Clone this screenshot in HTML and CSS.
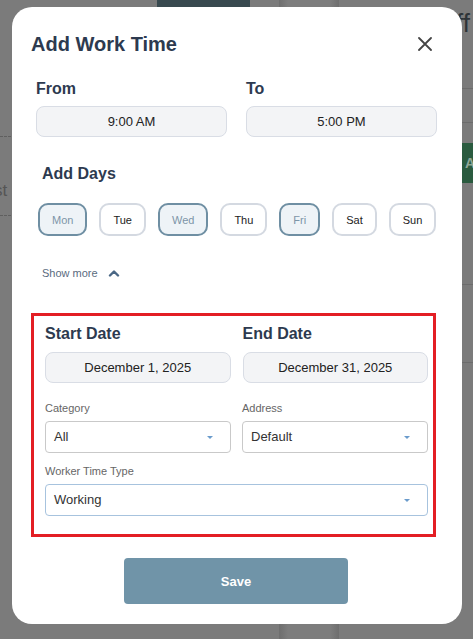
FILE: index.html
```html
<!DOCTYPE html>
<html lang="en">
<head>
    <meta charset="UTF-8">
    <meta name="viewport" content="width=device-width, initial-scale=1.0">
    <title>Add Work Time</title>
    <link rel="stylesheet" href="styles.css">
</head>
<body>
    <div class="backdrop">
        <div class="bg-bar"></div>
        <div class="bg-column"></div>
        <div class="bg-text-right">ff</div>
        <div class="bg-green">A</div>
        <div class="bg-line bg-line-r1"></div>
        <div class="bg-line bg-line-r2"></div>
        <div class="bg-line bg-line-r3"></div>
        <div class="bg-line bg-line-r4"></div>
        <div class="bg-dash bg-dash-1"></div>
        <div class="bg-dash bg-dash-2"></div>
        <div class="bg-text-left">st</div>
    </div>

    <div class="modal">
        <div class="modal-header">
            <h2>Add Work Time</h2>
            <button class="close-btn" aria-label="Close">
                <svg width="14" height="14" viewBox="0 0 14 14">
                    <path d="M1 1 L13 13 M13 1 L1 13" stroke="#444" stroke-width="1.8" stroke-linecap="round"/>
                </svg>
            </button>
        </div>

        <div class="two-col time-row">
            <div class="field">
                <label class="big-label">From</label>
                <div class="pill-input">9:00 AM</div>
            </div>
            <div class="field">
                <label class="big-label">To</label>
                <div class="pill-input">5:00 PM</div>
            </div>
        </div>

        <div class="days">
            <label class="big-label days-label">Add Days</label>
            <div class="day-list">
                <button class="day selected">Mon</button>
                <button class="day">Tue</button>
                <button class="day selected">Wed</button>
                <button class="day">Thu</button>
                <button class="day selected">Fri</button>
                <button class="day">Sat</button>
                <button class="day">Sun</button>
            </div>
            <div class="show-more">
                Show more
                <svg width="12" height="8" viewBox="0 0 12 8">
                    <path d="M2 6.5 L6 2.5 L10 6.5" fill="none" stroke="#4a6785" stroke-width="2.4" stroke-linecap="round" stroke-linejoin="round"/>
                </svg>
            </div>
        </div>

        <div class="highlight">
            <div class="two-col date-row">
                <div class="field">
                    <label class="big-label">Start Date</label>
                    <div class="pill-input">December 1, 2025</div>
                </div>
                <div class="field">
                    <label class="big-label">End Date</label>
                    <div class="pill-input">December 31, 2025</div>
                </div>
            </div>

            <div class="two-col select-row">
                <div class="field">
                    <label class="small-label">Category</label>
                    <div class="select">All<span class="caret"></span></div>
                </div>
                <div class="field">
                    <label class="small-label">Address</label>
                    <div class="select">Default<span class="caret"></span></div>
                </div>
            </div>

            <div class="field type-field">
                <label class="small-label">Worker Time Type</label>
                <div class="select focused">Working<span class="caret"></span></div>
            </div>
        </div>

        <div class="actions">
            <button class="save-btn">Save</button>
        </div>
    </div>
</body>
</html>
```

FILE: styles.css
```css
* {
    box-sizing: border-box;
}
body {
    margin: 0;
    background-color: #7b7b7b;
    font-family: "Liberation Sans", Arial, sans-serif;
    color: #2d3a4e;
    height: 639px;
    overflow: hidden;
}

/* app behind the overlay */
.backdrop {
    position: absolute;
    inset: 0;
    overflow: hidden;
}
.bg-bar {
    position: absolute;
    left: 157px;
    top: 0;
    width: 93px;
    height: 7px;
    background: #38494f;
}
.bg-column {
    position: absolute;
    left: 279px;
    top: 0;
    width: 60px;
    height: 639px;
    background: linear-gradient(to right, #6e6e6e, #7d7d7d 15%, #7d7d7d 85%, #6e6e6e);
}
.bg-text-right {
    position: absolute;
    left: 456px;
    top: 8px;
    font-size: 26px;
    color: #2e3438;
}
.bg-green {
    position: absolute;
    left: 462px;
    top: 143px;
    width: 20px;
    height: 40px;
    background: #2a5b3f;
    color: #8fa898;
    font-size: 14px;
    font-weight: bold;
    line-height: 40px;
    padding-left: 3px;
}
.bg-line {
    position: absolute;
    left: 462px;
    width: 20px;
    height: 1px;
    background: #6c6c6c;
}
.bg-line-r1 { top: 88px; }
.bg-line-r2 { top: 122px; }
.bg-line-r3 { top: 284px; }
.bg-line-r4 { top: 362px; }
.bg-dash {
    position: absolute;
    left: 0;
    width: 11px;
    border-top: 1px dashed #5f5f5f;
}
.bg-dash-1 { top: 136px; }
.bg-dash-2 { top: 215px; }
.bg-text-left {
    position: absolute;
    left: -6px;
    top: 181px;
    font-size: 17px;
    color: #555;
}

/* modal */
.modal {
    position: relative;
    width: 450px;
    margin: 7px 0 0 12px;
    background: #fff;
    border-radius: 20px;
    padding: 24px 25px 20px 24px;
}
.modal-header {
    display: flex;
    justify-content: space-between;
    align-items: center;
    margin-left: -5px;
    padding-right: 5px;
    height: 26px;
}
.modal-header h2 {
    margin: 0;
    font-size: 20px;
    font-weight: bold;
    color: #2d3a4f;
}
.close-btn {
    background: none;
    border: none;
    padding: 0;
    width: 14px;
    height: 14px;
    display: flex;
    cursor: pointer;
}

.two-col {
    display: grid;
    grid-template-columns: 1fr 1fr;
    column-gap: 19px;
}
.field {
    display: flex;
    flex-direction: column;
}
.big-label {
    font-size: 16px;
    font-weight: bold;
    line-height: 20px;
    color: #2d3a4f;
}
.pill-input {
    margin-top: 7px;
    height: 31px;
    line-height: 29px;
    text-align: center;
    font-size: 13px;
    color: #222;
    background: #f3f4f6;
    border: 1px solid #d9dde5;
    border-radius: 8px;
}
.time-row {
    margin-top: 22px;
}

.days {
    margin-top: 27px;
    padding-left: 2px;
}
.days-label {
    display: block;
    margin-left: 4px;
}
.day-list {
    display: flex;
    gap: 12px;
    margin-top: 19px;
}
.day {
    height: 33px;
    padding: 0 12px;
    border: 2px solid #d4d9e1;
    border-radius: 10px;
    background: #fff;
    font-family: inherit;
    font-size: 11px;
    color: #222;
}
.day.selected {
    border-color: #6f8fa3;
    background: #eef3f7;
    color: #7d95a8;
}
.show-more {
    display: flex;
    align-items: center;
    gap: 10px;
    margin: 30px 0 0 4px;
    font-size: 11px;
    line-height: 14px;
    color: #5a6b80;
}

.highlight {
    margin: 33px 1px 0 -5px;
    border: 3px solid #e31e24;
    padding: 8px 5px 18px 11px;
}
.date-row {
    column-gap: 12px;
}
.date-row .pill-input {
    margin-top: 8px;
}
.select-row {
    column-gap: 11px;
    margin-top: 18px;
}
.small-label {
    font-size: 11px;
    line-height: 14px;
    color: #666;
}
.select {
    position: relative;
    margin-top: 6px;
    height: 32px;
    line-height: 30px;
    padding-left: 8px;
    font-size: 13px;
    color: #333;
    border: 1px solid #c9c9c9;
    border-radius: 4px;
    background: #fff;
}
.select.focused {
    border-color: #a7c3de;
}
.caret {
    position: absolute;
    right: 17px;
    top: 14px;
    border-left: 3px solid transparent;
    border-right: 3px solid transparent;
    border-top: 3px solid #6a9bcc;
}
.type-field {
    margin-top: 11px;
}

.actions {
    display: flex;
    justify-content: center;
    margin-top: 21px;
}
.save-btn {
    width: 224px;
    height: 46px;
    margin-left: -1px;
    border: none;
    border-radius: 4px;
    background: #7094a8;
    color: #fff;
    font-family: inherit;
    font-size: 13px;
    font-weight: bold;
}
```
